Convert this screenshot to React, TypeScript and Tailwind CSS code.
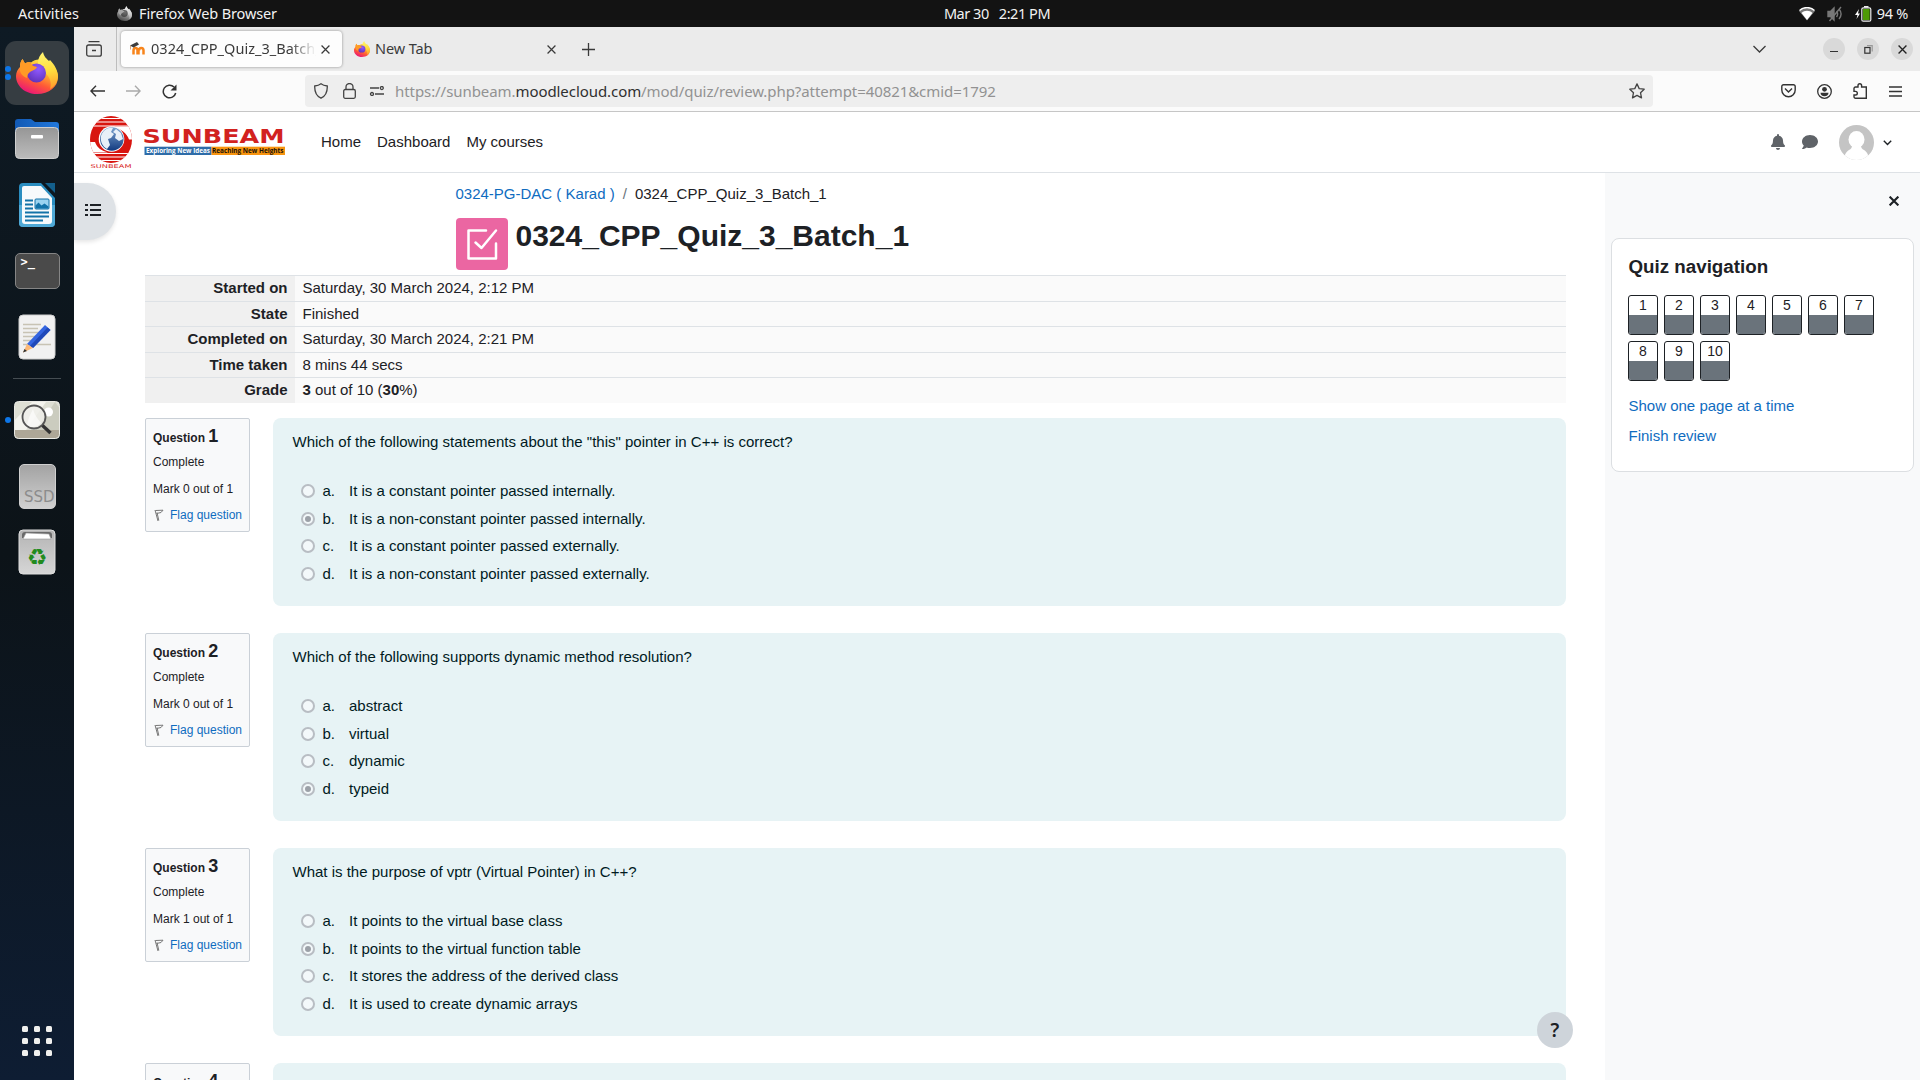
import React from "react";

const UI = "font-['Noto_Sans','Open_Sans',sans-serif]";

const questions = [
  {
    n: 1,
    mark: 0,
    text: 'Which of the following statements about the "this" pointer in C++ is correct?',
    answers: [
      "It is a constant pointer passed internally.",
      "It is a non-constant pointer passed internally.",
      "It is a constant pointer passed externally.",
      "It is a non-constant pointer passed externally.",
    ],
    picked: 1,
  },
  {
    n: 2,
    mark: 0,
    text: "Which of the following supports dynamic method resolution?",
    answers: ["abstract", "virtual", "dynamic", "typeid"],
    picked: 3,
  },
  {
    n: 3,
    mark: 1,
    text: "What is the purpose of vptr (Virtual Pointer) in C++?",
    answers: [
      "It points to the virtual base class",
      "It points to the virtual function table",
      "It stores the address of the derived class",
      "It is used to create dynamic arrays",
    ],
    picked: 1,
  },
  { n: 4, mark: 0, text: "", answers: [], picked: -1 },
];

function FirefoxLogo({ size, gray = false }: { size: number; gray?: boolean }) {
  const id = gray ? "g" : "c" + size;
  return (
    <svg width={size} height={size} viewBox="0 0 42 42" className={gray ? "grayscale" : ""}>
      <defs>
        <linearGradient id={"body" + id} x1="0.8" y1="0.05" x2="0.3" y2="1">
          <stop offset="0" stopColor="#fff04a" />
          <stop offset="0.35" stopColor="#ffb02e" />
          <stop offset="0.65" stopColor="#ff5a36" />
          <stop offset="1" stopColor="#e8127c" />
        </linearGradient>
        <radialGradient id={"ball" + id} cx="0.6" cy="0.3" r="0.8">
          <stop offset="0" stopColor="#9059ff" />
          <stop offset="1" stopColor="#5b2fb4" />
        </radialGradient>
        <linearGradient id={"tail" + id} x1="0.6" y1="0" x2="0.7" y2="1">
          <stop offset="0" stopColor="#fff36e" />
          <stop offset="0.5" stopColor="#ffdc3e" />
          <stop offset="1" stopColor="#ff9a2a" />
        </linearGradient>
      </defs>
      <path d="M4 15C4 11 5 9 6.500 7l2.500 4.500C11 10 13 10 15 10.500 18 8 22 7 26 8c10 3 16 9 16 17 0 10-9 17-21 17S0 34 0 24c0-4 2-7 4-9Z" fill={"url(#body" + id + ")"} />
      <path d="M22 11C22 6 24 3 27 0c1 5 4 7 6 9l1-1c5 5 8 11 8 17-1 6-4 10-8 12 2-6 0-12-5-16-3-3-7-5-7-10Z" fill={"url(#tail" + id + ")"} />
      <circle cx="20.500" cy="21" r="9.500" fill={"url(#ball" + id + ")"} />
      <path d="M4 15C4 11 5 9 6.500 7l2.500 4.500C11 10 13 10 15 10.500c0 2 1.500 3.500 6 4.500-1 3-5 3.500-7 5-1.500 1-3 3-3 6C6 24 3 20 4 15Z" fill="#ff9a26" />
    </svg>
  );
}

function Dock() {
  const cell = "relative flex h-16 w-16 shrink-0 items-center justify-center";
  const dot = "absolute left-0 h-1.5 w-1.5 rounded-full bg-[#0d76e8]";
  return (
    <aside className="flex w-[74px] shrink-0 flex-col items-center gap-0.5 bg-linear-to-b from-[#0e1a24] via-[#0c1318] to-[#0e1d33] pt-3.5 pb-[24px]">
      <div className={cell + " rounded-[11px] bg-[#363d42]"}>
        <span className={dot + " top-[25px]"} />
        <span className={dot + " top-[33px]"} />
        <FirefoxLogo size={42} />
      </div>
      <div className={cell}>
        <svg width="46" height="42" viewBox="0 0 46 42">
          <defs>
            <linearGradient id="fold" x1="0" y1="0" x2="0" y2="1">
              <stop offset="0" stopColor="#969696" />
              <stop offset="1" stopColor="#bcbcbc" />
            </linearGradient>
            <linearGradient id="foldb" x1="0" y1="0" x2="1" y2="0">
              <stop offset="0" stopColor="#1259b4" />
              <stop offset="1" stopColor="#2178dc" />
            </linearGradient>
          </defs>
          <path d="M1 14V4a3 3 0 0 1 3-3h13l4 3h21a3 3 0 0 1 3 3v8Z" fill="url(#foldb)" />
          <rect x="1.500" y="9.500" width="43" height="31" rx="4" fill="url(#fold)" stroke="#cfcfcf" />
          <rect x="17" y="17" width="12" height="3.500" rx="1" fill="#fff" />
        </svg>
      </div>
      <div className={cell}>
        <svg width="38" height="46" viewBox="0 0 38 46">
          <path d="M5 1h18l14 15v25a4 4 0 0 1-4 4H5a4 4 0 0 1-4-4V5a4 4 0 0 1 4-4Z" fill="#2a8dc0" />
          <path d="M1 23h36v18a4 4 0 0 1-4 4H5a4 4 0 0 1-4-4Z" fill="#4fa9d6" />
          <path d="M6 4h17l11 12v23a3 3 0 0 1-3 3H7a3 3 0 0 1-3-3V6a2 2 0 0 1 2-2Z" fill="#f7fafc" />
          <path d="M27 1h10v10Z" fill="#135f8c" />
          <path d="M7 18.500h8M7 22.500h8M7 26.500h8M7 30.500h24M7 34.500h24M7 38.500h18" stroke="#1272a8" strokeWidth="2" />
          <rect x="17" y="17" width="14" height="10" rx="1" fill="#9bd3f0" stroke="#1272a8" />
          <path d="m17.500 26.500 0-3 3-3 3 3 3-2 4 3v2Z" fill="#1272a8" />
        </svg>
      </div>
      <div className={cell}>
        <div className="relative h-9 w-[45px] rounded-[5px] border border-[#858585] bg-[#4a4a4a] font-['DejaVu_Sans_Mono',monospace] text-[12px] leading-[16px] font-bold text-white">
          <span className="absolute top-0 left-[5px]">&gt;_</span>
        </div>
      </div>
      <div className={cell}>
        <svg width="38" height="46" viewBox="0 0 38 46">
          <rect x="1" y="1" width="36" height="44" rx="4" fill="#f1f1f1" stroke="#cfcfcf" />
          <path d="M5 10.500h18M5 14.500h15M5 18.500h18M5 22.500h18M5 26.500h12M5 30.500h28" stroke="#c8c3b4" strokeWidth="1.600" />
          <path d="m27 11 5.500 5L15 34l-6-4Z" fill="#3465e0" />
          <path d="m29.500 13.500 3 2.500L15 34l-3-2Z" fill="#1f48b8" />
          <path d="m9 30 6 4-10 4.500Z" fill="#fcb978" />
          <path d="m6.500 35 2.500 2-4 1.500Z" fill="#333" />
        </svg>
      </div>
      <div className="flex h-[15px] w-12 shrink-0 items-center">
        <span className="h-px w-full bg-[#454d52]" />
      </div>
      <div className={cell}>
        <span className={dot + " top-[29px]"} />
        <svg width="46" height="38" viewBox="0 0 46 38">
          <rect x=".5" y=".5" width="45" height="37" rx="4" fill="#dedfd4" />
          <path d="M0 20 18 1h14L12 29H0Z" fill="#f4f4ee" />
          <path d="M45.500 7v22H22L41 1Z" fill="#cbccbf" />
          <path d="M.5 29h45v4.500a4 4 0 0 1-4 4h-37a4 4 0 0 1-4-4Z" fill="#aea797" />
          <rect x=".5" y=".5" width="45" height="37" rx="4" fill="none" stroke="#e9e9e4" />
          <circle cx="34.500" cy="11" r="4.500" fill="#fff" />
          <circle cx="20" cy="16" r="11.500" fill="#eeeee8" fillOpacity=".8" stroke="#555" strokeWidth="1.800" />
          <path d="M13 24c1-6 3-10 6-16 1 5 4 9 8 14-4 5-10 5-14 2Z" fill="#fff" opacity=".6" />
          <path d="m28.500 24.500 8 7.500" stroke="#333" strokeWidth="3.400" />
        </svg>
      </div>
      <div className={cell}>
        <div className="flex h-[45px] w-[37px] items-end justify-end rounded-[5px] border border-[#cfcfcf] bg-linear-to-b from-[#a3a3a3] to-[#d0d0d0] font-['DejaVu_Sans',sans-serif] text-[15px] leading-[22px] text-[#8c8c8c]">
          SSD
        </div>
      </div>
      <div className={cell}>
        <svg width="38" height="46" viewBox="0 0 38 46">
          <defs>
            <linearGradient id="bin" x1="0" y1="0" x2="0" y2="1">
              <stop offset="0" stopColor="#b4b4b4" />
              <stop offset="1" stopColor="#d6d6d6" />
            </linearGradient>
          </defs>
          <rect x="1" y="1" width="36" height="44" rx="4" fill="url(#bin)" stroke="#dedede" />
          <path d="M4 9V6a3 3 0 0 1 3-3h24a3 3 0 0 1 3 3v3Z" fill="#6a6a6a" />
          <path d="M5 10 8 4l23 1 2 5Z" fill="#fff" stroke="#999" strokeWidth=".6" />
          <text x="19" y="36" textAnchor="middle" fontFamily="DejaVu Sans" fontSize="23" fill="#228b1e">♻</text>
        </svg>
      </div>
      <div className="mt-auto grid grid-cols-3 gap-1.5">
        {Array.from({ length: 9 }, (_, i) => (
          <span key={i} className="h-1.5 w-1.5 rounded-[1.5px] bg-[#f0f0ee]" />
        ))}
      </div>
    </aside>
  );
}

function TopBar() {
  return (
    <header className={"grid h-[27px] shrink-0 grid-cols-3 items-center bg-[#131313] text-[14.5px] text-[#f2f2f2] " + UI}>
      <div className="flex items-center pl-[18px]">
        <span className="w-[99px] tracking-[0.05px]">Activities</span>
        <FirefoxLogo size={15} gray />
        <span className="ml-[7px] tracking-[-0.12px]">Firefox Web Browser</span>
      </div>
      <div className="flex justify-center gap-2.5 pl-[74px] tracking-[-0.45px]">
        <span>Mar 30</span>
        <span>2:21 PM</span>
      </div>
      <div className="flex items-center justify-end pr-3">
        <svg width="16" height="14" viewBox="0 0 16 14" className="mr-[12px]">
          <path d="M0 4C4-.5 12-.5 16 4l-8 9.500Z" fill="#777" />
          <path d="M.5 3.500C4.500-.5 11.500-.5 15.500 3.500" fill="none" stroke="#fff" strokeWidth="1.300" />
          <path d="M2.500 6c3-3 8-3 11 0L8 13Z" fill="#fff" />
        </svg>
        <svg width="16" height="16" viewBox="0 0 16 16" className="mr-[12px]" fill="none" stroke="#777" strokeWidth="1.400">
          <path d="M1 5.500h2.500L7 2v12l-3.500-3.500H1Z" fill="#777" />
          <path d="M9.500 5c1.500 2 1.500 4 0 6M12 3c2.500 3 2.500 7 0 10M2.500 15 14 1" />
        </svg>
        <svg width="17" height="16" viewBox="0 0 17 16" className="mr-[5px]">
          <path d="M4 3 0 9h2.500L1.500 13 5 7.500H3Z" fill="#fff" />
          <rect x="6.800" y="1.800" width="9" height="13.400" rx="1.500" fill="none" stroke="#eee" strokeWidth="1.200" />
          <rect x="9" y="0" width="4.500" height="1.600" fill="#eee" />
          <rect x="8" y="3" width="6.600" height="11" fill="#4e9a06" />
        </svg>
        <span className="tracking-[-0.3px]">94 %</span>
      </div>
    </header>
  );
}

const X = ({ s = 8, w = 1.3, c = "#3a3a3a" }: { s?: number; w?: number; c?: string }) => (
  <svg width={s} height={s} viewBox="0 0 8 8" fill="none" stroke={c} strokeWidth={w}>
    <path d="m.5.5 7 7m0-7-7 7" />
  </svg>
);

function TabStrip() {
  const btn = "flex h-[22px] w-[22px] items-center justify-center rounded-full bg-[#d9d9d9]";
  return (
    <div className={"flex h-11 items-center bg-[#ebebeb] text-[14.5px] text-[#3b3b3b] " + UI}>
      <div className="flex h-full w-[43px] items-center justify-center border-r border-[#bdbdbd] pr-0.5">
        <svg width="16" height="16" viewBox="0 0 16 16" fill="none" stroke="#3c3c3c" strokeWidth="1.300">
          <path d="M2.500 .7h11M6 9.500h4" />
          <rect x=".7" y="4" width="14.600" height="11.200" rx="2" />
        </svg>
      </div>
      <div className="ml-1 flex h-9 w-[221px] items-center rounded-[4px] bg-[#fdfdfd] pl-[8px] shadow-[0_0_3px_rgba(0,0,0,0.4)]">
        <svg width="17" height="14" viewBox="0 0 17 14">
          <path d="M4.500 12.500V8.500c0-3.500 4-3.500 4 0v4M9.500 12.500V8.500M10 8.500c0-3.500 4.500-3.500 4.500 0v4" fill="none" stroke="#f7841b" strokeWidth="2.500" />
          <path d="M1 3.500 8 0l2 2.500-5.500 3Z" fill="#3d3d3d" />
          <path d="M1.500 3.500v4" stroke="#c98f5e" strokeWidth=".8" />
        </svg>
        <span className="ml-[5px] w-[165px] overflow-hidden [mask-image:linear-gradient(to_right,black_84%,transparent)] tracking-[0.03px] whitespace-nowrap">
          0324_CPP_Quiz_3_Batch_1
        </span>
        <span className="ml-[5px]"><X s={9} w={1.1} /></span>
      </div>
      <div className="ml-3 flex w-[209px] items-center">
        <FirefoxLogo size={16} />
        <span className="ml-[5px] tracking-[-0.1px]">New Tab</span>
        <span className="mr-[7px] ml-auto"><X s={9} w={1.1} /></span>
      </div>
      <svg width="13" height="13" viewBox="0 0 13 13" className="ml-[19px]" stroke="#3a3a3a" strokeWidth="1.300">
        <path d="M6.500 0v13M0 6.500h13" />
      </svg>
      <svg width="13" height="8" viewBox="0 0 13 8" className="mr-[57px] ml-auto" fill="none" stroke="#3a3a3a" strokeWidth="1.300">
        <path d="m.5 1 6 6 6-6" />
      </svg>
      <div className="flex gap-3 pr-[7px]">
        <span className={btn}><span className="mt-1 h-px w-[8px] bg-[#333]" /></span>
        <span className={btn}>
          <svg width="9" height="9" viewBox="0 0 9 9" fill="none" stroke="#333" strokeWidth="1.200">
            <rect x=".8" y="2.500" width="5.200" height="5.700" />
            <path d="M3 .7h5.200V6.500" stroke="#999" />
          </svg>
        </span>
        <span className={btn}><X s={9} w={1.2} c="#222" /></span>
      </div>
    </div>
  );
}

function UrlBar() {
  return (
    <div className={"flex h-[41px] items-center border-b border-[#c6c6c6] bg-[#fbfbfb] " + UI}>
      <div className="flex w-[231px] items-center pl-[16px]">
        <svg width="15" height="12" viewBox="0 0 15 12" fill="none" stroke="#333" strokeWidth="1.400"><path d="M15 6H1m5-5.300L.9 6 6 11.300" /></svg>
        <svg width="15" height="12" viewBox="0 0 15 12" className="ml-[21px]" fill="none" stroke="#aaa" strokeWidth="1.400"><path d="M0 6h14M9 .7 14.100 6 9 11.300" /></svg>
        <svg width="15" height="15" viewBox="0 0 15 15" className="ml-[21px]" fill="none" stroke="#333" strokeWidth="1.500"><path d="M12 3A6.300 6.300 0 1 0 13.700 9" /><path d="M14.500 .5v6h-6Z" fill="#333" stroke="none" /></svg>
      </div>
      <div className="flex h-8 w-[1348px] items-center rounded-[4px] bg-[#eeeeee] pr-2 pl-[9px] text-[15px] text-[#929292]">
        <svg width="14" height="16" viewBox="0 0 14 16" fill="none" stroke="#444" strokeWidth="1.300"><path d="M7 .8c2 1.600 4 2 6.300 2.200C13.500 9 12 13 7 15.200 2 13 .5 9 .7 3 3 2.800 5 2.400 7 .8Z" /></svg>
        <svg width="13" height="16" viewBox="0 0 13 16" className="ml-[15px]" fill="none" stroke="#444" strokeWidth="1.300"><rect x=".7" y="6.500" width="11.600" height="8.800" rx="1.500" /><path d="M3 6.500V4a3.500 3.500 0 0 1 7 0v2.500" /></svg>
        <svg width="16" height="10" viewBox="0 0 16 10" className="ml-[13px]" fill="none" stroke="#444" strokeWidth="1.300"><path d="M1 2h9M6 8h9" /><circle cx="12.800" cy="2" r="1.500" /><circle cx="3" cy="8" r="1.500" /></svg>
        <span className="ml-[10px] tracking-[-0.07px]">
          https://sunbeam.<span className="text-[#303030]">moodlecloud.com</span>/mod/quiz/review.php?attempt=40821&amp;cmid=1792
        </span>
        <svg width="16" height="16" viewBox="0 0 16 16" className="ml-auto" fill="none" stroke="#444" strokeWidth="1.300" strokeLinejoin="round"><path d="m8 .9 2.200 4.700 5 .6-3.700 3.500 1 5.200L8 12.400l-4.500 2.500 1-5.200L.8 6.200l5-.6Z" /></svg>
      </div>
      <div className="ml-auto flex items-center gap-[21px] pr-[18px]">
        <svg width="15" height="14" viewBox="0 0 15 14" className="-ml-px mr-px" fill="none" stroke="#333" strokeWidth="1.400"><path d="M2.500 .8h10a1.700 1.700 0 0 1 1.700 1.700V6a6.700 6.700 0 0 1-13.400 0V2.500A1.700 1.700 0 0 1 2.500 .8Z" /><path d="m4 4.500 3.500 3.500L11 4.500" /></svg>
        <svg width="15" height="15" viewBox="0 0 15 15" className="-ml-px mr-px" fill="none" stroke="#333" strokeWidth="1.300"><circle cx="7.500" cy="7.500" r="6.800" /><circle cx="7.500" cy="5.300" r="2.400" fill="#333" stroke="none" /><path d="M3.500 8.800h8c0 2-1.500 3.500-4 3.500s-4-1.500-4-3.500Z" fill="#333" stroke="none" /></svg>
        <svg width="14" height="16" viewBox="0 0 14 16" className="-ml-px mr-px" fill="none" stroke="#333" strokeWidth="1.400"><path d="M1 6V5.500A1.500 1.500 0 0 1 2.500 4H5V2.500a1.800 1.800 0 0 1 3.600 0V4h4.700v11.300H2.500A1.500 1.500 0 0 1 1 13.800V12h1.500a1.800 1.800 0 0 0 0-3.600H1Z" /></svg>
        <svg width="13" height="11" viewBox="0 0 13 11" stroke="#333" strokeWidth="1.300"><path d="M0 1h13M0 5.500h13M0 10h13" /></svg>
      </div>
    </div>
  );
}

function SunbeamLogo() {
  return (
    <svg width="200" height="56" viewBox="88 114 200 56" className="shrink-0">
      <defs>
        <clipPath id="disc"><ellipse cx="111" cy="139.500" rx="21" ry="23.500" /></clipPath>
        <linearGradient id="globe" x1="0" y1="0" x2="0" y2="1">
          <stop offset="0" stopColor="#7ba3cf" />
          <stop offset="1" stopColor="#123a80" />
        </linearGradient>
      </defs>
      <g clipPath="url(#disc)">
        <rect x="88" y="114" width="46" height="50" fill="#d8150f" />
        <path d="M88 118.500h46M88 122h46M88 126h46M88 153.500h46M88 157h46M88 160.500h46" stroke="#fff" strokeWidth="1.200" />
        <path d="M112 126.500h24v13h-7c-2-6-8-11-17-13ZM86 142h9c2 6 7 9 13 10.500H86Z" fill="#fff" />
      </g>
      <circle cx="111.500" cy="139" r="12.800" fill="#fff" />
      <circle cx="111.800" cy="139" r="11.800" fill="url(#globe)" />
      <path d="M101 136c2-6 7-9 12-8l-2 4 3 2-3 4-3 1 2 6-3 4c-4-2-7-7-6-13ZM116 129l5 4 2 6-4 2-4-3 1-4-3-2Z" fill="#e8f0f8" />
      <text x="90.500" y="168.300" fontFamily="DejaVu Sans" fontSize="5.200" textLength="41" lengthAdjust="spacingAndGlyphs" fill="#d8221c">SUNBEAM</text>
      <text x="142.500" y="142.800" fontFamily="DejaVu Sans" fontWeight="bold" fontSize="20" textLength="142" lengthAdjust="spacingAndGlyphs" fill="#d2221f">SUNBEAM</text>
      <rect x="144.500" y="146.700" width="67" height="8.300" fill="#2e6ca8" />
      <rect x="211.500" y="146.700" width="73.500" height="8.300" fill="#f7940f" />
      <text x="146" y="153.400" fontFamily="Open Sans" fontWeight="bold" fontSize="7" textLength="64" lengthAdjust="spacingAndGlyphs" fill="#fff">Exploring New Ideas</text>
      <text x="212" y="153.400" fontFamily="Open Sans" fontWeight="bold" fontSize="7" textLength="71.500" lengthAdjust="spacingAndGlyphs" fill="#1a1208">Reaching New Heights</text>
    </svg>
  );
}

function Navbar() {
  return (
    <nav className="flex h-[61px] shrink-0 items-center border-b border-[#dee2e6] bg-white pl-[14px]">
      <SunbeamLogo />
      <div className="ml-[33px] flex gap-4 text-[15px] text-[#1d2125]">
        <span>Home</span>
        <span>Dashboard</span>
        <span>My courses</span>
      </div>
      <div className="ml-auto flex items-center pr-[28px]">
        <svg width="14" height="16" viewBox="0 0 448 512" fill="#5f6368"><path d="M224 512c35 0 64-29 64-64H160c0 35 29 64 64 64Zm215-149c-19-21-55-52-55-155 0-78-54-140-128-155V32a32 32 0 0 0-64 0v21C118 68 64 130 64 208c0 103-36 134-55 155-6 6-9 14-9 21 0 16 13 32 32 32h384c19 0 32-16 32-32 0-7-3-15-9-21Z" /></svg>
        <svg width="16" height="16" viewBox="0 0 512 512" className="ml-[17px]" fill="#5f6368"><path d="M256 32C115 32 0 125 0 240c0 50 21 95 57 131-13 50-54 95-55 95-2 2-3 6-1 9 1 3 4 5 7 5 66 0 116-32 141-51 33 12 69 19 107 19 141 0 256-93 256-208S397 32 256 32Z" /></svg>
        <svg width="35" height="35" viewBox="0 0 35 35" className="ml-[21px]">
          <defs><clipPath id="ava"><circle cx="17.500" cy="17.500" r="17.500" /></clipPath></defs>
          <g clipPath="url(#ava)">
            <rect width="35" height="35" fill="#c4c4c4" />
            <ellipse cx="17.500" cy="14.500" rx="8" ry="8.500" fill="#fff" />
            <path d="M13 20h9c0 3 1 4 3 5 3 2 5 5 5 10H5c0-5 2-8 5-10 2-1 3-2 3-5Z" fill="#fff" />
          </g>
        </svg>
        <svg width="9" height="6" viewBox="0 0 9 6" className="mt-[2px] ml-[9px]" fill="none" stroke="#1d2125" strokeWidth="1.400"><path d="m.8.8 3.700 3.700L8.200.8" /></svg>
      </div>
    </nav>
  );
}

const summary: [string, React.ReactNode][] = [
  ["Started on", "Saturday, 30 March 2024, 2:12 PM"],
  ["State", "Finished"],
  ["Completed on", "Saturday, 30 March 2024, 2:21 PM"],
  ["Time taken", "8 mins 44 secs"],
  ["Grade", <><b>3</b> out of 10 (<b>30</b>%)</>],
];

function Radio({ on }: { on: boolean }) {
  return (
    <span className="mt-[4px] flex h-3.5 w-3.5 items-center justify-center rounded-full border-2 border-[#b8bdc3] bg-[#f3f8fa]">
      {on && <span className="h-1.5 w-1.5 rounded-full bg-[#9ca1a8]" />}
    </span>
  );
}

function Question({ q }: { q: (typeof questions)[number] }) {
  return (
    <section className="mb-[27px] flex h-[188px] shrink-0 items-start justify-between">
      <div className="flex h-[114px] w-[105px] flex-col rounded-[2px] border border-[#cad0d7] bg-[#f8f9fa] pl-[7px] text-[12px] leading-[18px] text-[#1d2125]">
        <h3 className="mt-[4px] h-[26px] leading-[26px] font-bold">
          Question <span className="text-[18px]">{q.n}</span>
        </h3>
        <span className="mt-[4px]">Complete</span>
        <span className="mt-[9px]">Mark {q.mark} out of 1</span>
        <span className="mt-[8px] flex items-center text-[#0f6cbf]">
          <svg width="10" height="12" viewBox="0 0 10 12" className="mr-[6px] ml-px" fill="none" stroke="#777" strokeWidth="1"><path d="M1 1l3 11M1.500 1.500 9 1.200 7 3.500 2.500 4.500M3 3.500l1.800 8" /></svg>
          Flag question
        </span>
      </div>
      <div className="h-full w-[1293px] rounded-[8px] bg-[#e7f3f5] pt-[12.500px] pl-[19.5px] text-[15px] leading-[22.5px] text-[#001a1e]">
        <p>{q.text}</p>
        <ul className="mt-[27px] pl-[8.5px]">
          {q.answers.map((a, i) => (
            <li key={a} className="flex h-[27.5px] items-start">
              <Radio on={i === q.picked} />
              <span className="ml-[7.5px] w-[26.5px]">{"abcd"[i]}.</span>
              <span>{a}</span>
            </li>
          ))}
        </ul>
      </div>
    </section>
  );
}

function Drawer() {
  return (
    <aside className="flex w-[315px] shrink-0 flex-col bg-[#f8f9fa] pt-[23px] pl-1.5">
      <div className="flex h-[10px] justify-end pr-[21px]"><X s={10} w={1.7} c="#1d2125" /></div>
      <section className="mt-[32px] h-[234px] w-[303px] rounded-[8px] border border-[#dcdfe2] bg-white pr-8 pl-4 text-[15px]">
        <h2 className="mt-[15px] pl-[0.5px] text-[18.75px] leading-[26px] font-bold text-[#1d2125]">Quiz navigation</h2>
        <div className="mt-[15px] flex flex-wrap gap-1.5">
          {Array.from({ length: 10 }, (_, i) => (
            <span key={i} className="flex h-10 w-[30px] flex-col overflow-hidden rounded-[3px] border border-[#1d2125] text-center text-[14px] leading-[19px] text-[#1d2125]">
              <span className="h-[19px]">{i + 1}</span>
              <span className="flex-1 bg-[#6a737b]" />
            </span>
          ))}
        </div>
        <div className="mt-[14px] flex flex-col gap-[7.500px] pl-[0.5px] leading-[22.5px] text-[#0f6cbf]">
          <span>Show one page at a time</span>
          <span>Finish review</span>
        </div>
      </section>
    </aside>
  );
}

export default function App() {
  return (
    <div className="flex h-[1080px] w-[1920px] flex-col overflow-hidden bg-white font-['Liberation_Sans',Arial,sans-serif]">
      <TopBar />
      <div className="flex min-h-0 flex-1">
        <Dock />
        <div className="flex min-w-0 flex-1 flex-col">
          <TabStrip />
          <UrlBar />
          <Navbar />
          <div className="flex min-h-0 flex-1">
            <main className="relative flex min-w-0 flex-1 overflow-hidden bg-white">
              <button className="absolute top-[10px] left-0 flex h-[57px] w-[42px] items-center rounded-r-full bg-[#dee2e6] pl-[11px] shadow-[0_2px_4px_rgba(0,0,0,0.1)]">
                <svg width="16" height="14" viewBox="0 0 16 14" className="-mt-1" stroke="#1d2125" strokeWidth="2"><path d="M0 2h3M5 2h11M0 7h3M5 7h11M0 12h3M5 12h11" /></svg>
              </button>
              <div className="ml-[71px] flex w-[1421px] flex-col">
                <div className="mt-[10px] flex gap-[8px] pl-[310.5px] text-[15px] leading-[22.5px] text-[#1d2125]">
                  <span className="text-[#0f6cbf]">0324-PG-DAC ( Karad )</span>
                  <span className="text-[#6a737b]">/</span>
                  <span>0324_CPP_Quiz_3_Batch_1</span>
                </div>
                <div className="mt-[12.500px] flex h-[57px] shrink-0 gap-[7.5px] pl-[311px]">
                  <span className="flex h-[52px] w-[52px] items-center justify-center rounded-[4px] bg-[#eb66a2]">
                    <svg width="32" height="32" viewBox="0 0 32 32" fill="none" stroke="#fff" strokeWidth="2.500" strokeLinecap="round" strokeLinejoin="round"><path d="M20 2.500H2.500v28h27.500V15.500" /><path d="m9.500 14.500 6 5.500L30 2.500" /></svg>
                  </span>
                  <h1 className="text-[30px] leading-[36px] font-bold text-[#1d2125]">0324_CPP_Quiz_3_Batch_1</h1>
                </div>
                <div className="text-[15px] leading-[22.5px] text-[#1d2125]">
                  {summary.map(([k, v]) => (
                    <div key={k} className="flex h-[25.5px] border-t border-[#dee2e6] bg-[#fafafa]">
                      <span className="w-[150px] bg-[#f0f0f0] pt-px pr-[7.5px] text-right font-bold">{k}</span>
                      <span className="pt-px pl-[7.500px]">{v}</span>
                    </div>
                  ))}
                </div>
                <div className="mt-[15.5px] flex flex-col">
                  {questions.map((q) => (
                    <Question key={q.n} q={q} />
                  ))}
                </div>
              </div>
              <button className="absolute right-[32px] bottom-[32px] flex h-9 w-9 items-center justify-center rounded-full bg-[#ced4da] font-['Noto_Sans'] text-[19px] font-semibold text-[#1d2125]">
                ?
              </button>
            </main>
            <Drawer />
          </div>
        </div>
      </div>
    </div>
  );
}
